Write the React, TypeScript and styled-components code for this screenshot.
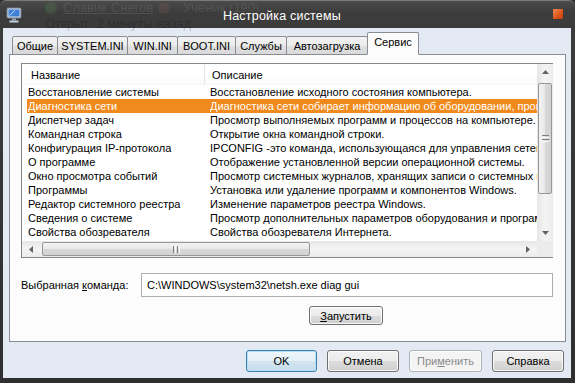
import styled, { createGlobalStyle } from 'styled-components';

const FONT = `'Liberation Sans', Arial, sans-serif`;

const GlobalStyle = createGlobalStyle`
  html, body {
    margin: 0;
    padding: 0;
    background: #2f2f2f;
  }
  body {
    font-family: ${FONT};
    font-size: 11px;
    color: #000;
  }
`;

const Window = styled.div`
  width: 575px;
  height: 383px;
  display: flex;
  flex-direction: column;
  box-sizing: border-box;
  padding: 0 4px 5px 3px;
  background: linear-gradient(#4a4a4a 0px, #3c3c3c 12px, #2f2f2f 100%);
  border-top: 1px solid #7a7a7a;
  border-radius: 6px 6px 0 0;
  overflow: hidden;
`;

const TitleBar = styled.div`
  position: relative;
  height: 27px;
  display: flex;
  align-items: center;
  justify-content: center;
  flex-shrink: 0;
`;

// content behind the glass frame, seen through it
const Ghost = styled.div`
  position: absolute;
  left: 42px;
  top: 0px;
  display: flex;
  flex-direction: column;
  gap: 2px;
  font-family: ${FONT};
  font-size: 13px;
  line-height: 14px;
  pointer-events: none;
`;

const GhostRow = styled.div<{ $dim?: boolean }>`
  display: flex;
  align-items: center;
  gap: 6px;
  color: ${(p) => (p.$dim ? 'rgba(0,0,0,0.22)' : 'rgba(170,190,170,0.16)')};
  white-space: nowrap;
`;

const GhostLink = styled.span`
  text-decoration: underline;
`;

const GhostDot = styled.span`
  width: 12px;
  height: 12px;
  border-radius: 50%;
  background: rgba(80, 150, 80, 0.22);
`;

const GhostBadge = styled.span`
  width: 10px;
  height: 10px;
  border-radius: 2px;
  background: rgba(200, 120, 120, 0.12);
`;

const GhostUser = styled.span`
  margin-left: 8px;
`;

const WinIcon = styled.div`
  position: absolute;
  left: 3px;
  top: 6px;
  width: 16px;
  height: 16px;
`;

const Title = styled.div`
  font-family: ${FONT};
  font-size: 12.5px;
  color: #fff;
  letter-spacing: 0.2px;
  margin-left: -10px;
  margin-top: 3px;
  position: relative;
`;

const CloseBtn = styled.div`
  position: absolute;
  right: 8px;
  top: 8px;
  width: 10px;
  height: 10px;
  border-radius: 1px;
  background: linear-gradient(135deg, #f08a4c, #d9541a 60%, #c2410e);
`;

const Client = styled.div`
  flex: 1;
  display: flex;
  flex-direction: column;
  background: #e3eaf3;
  padding: 5px 5px 6px 6px;
  box-sizing: border-box;
`;

const TabStrip = styled.div`
  display: flex;
  align-items: flex-end;
  padding-left: 4px;
  height: 22px;
  position: relative;
  z-index: 1;
  margin-bottom: -1px;
`;

const Tab = styled.div<{ $w: number; $active?: boolean }>`
  width: ${(p) => p.$w}px;
  height: ${(p) => (p.$active ? 23 : 19)}px;
  box-sizing: border-box;
  display: flex;
  align-items: center;
  justify-content: center;
  border: 1px solid #898c95;
  border-bottom: 1px solid ${(p) => (p.$active ? '#fcfcfc' : '#898c95')};
  border-radius: 2px 2px 0 0;
  margin-left: -1px;
  padding-bottom: ${(p) => (p.$active ? 3 : 0)}px;
  background: ${(p) =>
    p.$active ? '#fcfcfc' : 'linear-gradient(#f3f3f3, #ebebeb 50%, #e0e0e0 51%, #d9d9d9)'};
  position: relative;
  z-index: ${(p) => (p.$active ? 2 : 1)};
  white-space: nowrap;
`;

const Panel = styled.div`
  flex: 1;
  border: 1px solid #898c95;
  background: #fcfcfc;
  display: flex;
  flex-direction: column;
  padding: 8px 12px 0 11px;
  box-sizing: border-box;
`;

const ListBox = styled.div`
  border: 1px solid #828790;
  background: #fff;
  display: grid;
  grid-template-columns: 515px 16px;
  grid-template-rows: 177px 16px;
`;

const Main = styled.div`
  display: flex;
  flex-direction: column;
  overflow: hidden;
`;

const Header = styled.div`
  display: flex;
  height: 21px;
  flex-shrink: 0;
  background: linear-gradient(#ffffff, #ffffff 60%, #f7f8f9);
`;

const HeaderCell = styled.div<{ $w?: number; $pad: number }>`
  width: ${(p) => (p.$w ? `${p.$w}px` : 'auto')};
  flex: ${(p) => (p.$w ? '0 0 auto' : '1')};
  box-sizing: border-box;
  padding-left: ${(p) => p.$pad}px;
  display: flex;
  align-items: center;
  border-right: ${(p) => (p.$w ? '1px solid #e5e5e5' : 'none')};
`;

const Rows = styled.div`
  display: flex;
  flex-direction: column;
  padding-left: 5px;
`;

const Row = styled.div<{ $sel?: boolean }>`
  display: flex;
  height: 14px;
  line-height: 14px;
  padding-left: 1px;
  white-space: nowrap;
  overflow: hidden;
  background: ${(p) => (p.$sel ? '#f18a1c' : 'transparent')};
  color: ${(p) => (p.$sel ? '#fff' : '#000')};
`;

const Cell = styled.div<{ $w?: number }>`
  flex: ${(p) => (p.$w ? `0 0 ${p.$w}px` : '1 0 auto')};
  overflow: hidden;
`;

const VScroll = styled.div`
  grid-row: 1;
  grid-column: 2;
  background: linear-gradient(90deg, #e6e6e6, #f4f4f4 50%, #ececec);
  display: flex;
  flex-direction: column;
  align-items: center;
`;

const HScroll = styled.div`
  grid-row: 2;
  grid-column: 1;
  background: linear-gradient(#e6e6e6, #f4f4f4 50%, #ececec);
  display: flex;
  align-items: center;
`;

const Corner = styled.div`
  grid-row: 2;
  grid-column: 2;
  background: #ececec;
`;

const ArrowBox = styled.div<{ $size: number }>`
  width: ${(p) => p.$size}px;
  height: ${(p) => p.$size}px;
  display: flex;
  align-items: center;
  justify-content: center;
  flex-shrink: 0;
`;

const VThumb = styled.div`
  width: 14px;
  height: 111px;
  margin-top: 3px;
  box-sizing: border-box;
  border: 1px solid #979797;
  border-radius: 2px;
  background: linear-gradient(90deg, #f3f3f3, #e8e8e8 50%, #d8d8d8 51%, #d2d2d2);
  display: flex;
  align-items: center;
  justify-content: center;
`;

const HThumb = styled.div`
  width: 268px;
  height: 14px;
  margin-left: 2px;
  box-sizing: border-box;
  border: 1px solid #979797;
  border-radius: 2px;
  background: linear-gradient(#f3f3f3, #e8e8e8 50%, #d8d8d8 51%, #d2d2d2);
  display: flex;
  align-items: center;
  justify-content: center;
`;

const Spacer = styled.div`
  flex: 1;
`;

const CommandRow = styled.div`
  display: flex;
  align-items: center;
  margin-top: 15px;
`;

const Label = styled.div`
  width: 120px;
  flex-shrink: 0;
  white-space: nowrap;
`;

const TextBox = styled.div`
  flex: 1;
  height: 24px;
  box-sizing: border-box;
  border: 1px solid #abadb3;
  background: #fff;
  display: flex;
  align-items: center;
  padding-left: 5px;
  white-space: nowrap;
`;

const RunRow = styled.div`
  display: flex;
  justify-content: center;
  padding-left: 118px;
  margin-top: 9px;
`;

const Button = styled.div<{ $w: number; $h: number; $focus?: boolean; $disabled?: boolean }>`
  width: ${(p) => p.$w}px;
  height: ${(p) => p.$h}px;
  box-sizing: border-box;
  border: 1px solid ${(p) => (p.$focus ? '#3c7fb1' : p.$disabled ? '#adb2b5' : '#707070')};
  border-radius: 3px;
  background: ${(p) =>
    p.$disabled
      ? '#f4f4f4'
      : p.$focus
        ? 'linear-gradient(#eef6fb, #e4eff7 50%, #d3e5f1 51%, #c7dcea)'
        : 'linear-gradient(#f2f2f2, #ebebeb 50%, #dddddd 51%, #cfcfcf)'};
  box-shadow: inset 0 0 0 1px ${(p) => (p.$focus ? '#b6e0f7' : 'rgba(255,255,255,0.8)')};
  color: ${(p) => (p.$disabled ? '#8b8b8b' : '#000')};
  display: flex;
  align-items: center;
  justify-content: center;
  white-space: nowrap;
`;

const Key = styled.span`
  text-decoration: underline;
`;

const ButtonRow = styled.div`
  display: flex;
  justify-content: flex-end;
  gap: 10px;
  margin-top: 8px;
  padding-right: 2px;
`;

const Tri = ({ dir }: { dir: 'up' | 'down' | 'left' | 'right' }) => {
  const pts = {
    up: '3.5,1 7,5 0,5',
    down: '0,1 7,1 3.5,5',
    left: '5,0 5,7 1,3.5',
    right: '1,0 1,7 5,3.5',
  }[dir];
  const vertical = dir === 'up' || dir === 'down';
  return (
    <svg width={vertical ? 7 : 6} height={vertical ? 6 : 7}>
      <polygon points={pts} fill="#5f6368" />
    </svg>
  );
};

const Grip = ({ vertical }: { vertical?: boolean }) => (
  <svg width={7} height={7}>
    {[0, 2, 4, 6].map((i) =>
      vertical ? (
        <rect key={i} x={0} y={i} width={7} height={1} fill={i % 4 === 0 ? '#7d7d7d' : '#fafafa'} />
      ) : (
        <rect key={i} x={i} y={0} width={1} height={7} fill={i % 4 === 0 ? '#7d7d7d' : '#fafafa'} />
      ),
    )}
  </svg>
);

const MonitorIcon = () => (
  <svg width="16" height="16" viewBox="0 0 16 16">
    <rect x="1" y="1" width="14" height="10" rx="1" fill="#d8dde6" stroke="#6c7a8c" />
    <rect x="2.5" y="2.5" width="11" height="7" fill="#3f7fd6" />
    <path d="M3.5 8.5 L9 3.5" stroke="#cfe3ff" strokeWidth="1" />
    <rect x="6" y="11.5" width="4" height="2" fill="#9aa4b0" />
    <rect x="3.5" y="13.5" width="9" height="2" rx="0.5" fill="#c9cfd7" stroke="#7b8694" strokeWidth="0.6" />
  </svg>
);

const tabs: { label: string; w: number; active?: boolean }[] = [
  { label: 'Общие', w: 46 },
  { label: 'SYSTEM.INI', w: 71 },
  { label: 'WIN.INI', w: 51 },
  { label: 'BOOT.INI', w: 59 },
  { label: 'Службы', w: 52 },
  { label: 'Автозагрузка', w: 82 },
  { label: 'Сервис', w: 52, active: true },
];

const tools: [string, string][] = [
  ['Восстановление системы', 'Восстановление исходного состояния компьютера.'],
  ['Диагностика сети', 'Диагностика сети собирает информацию об оборудовании, программном обеспечении'],
  ['Диспетчер задач', 'Просмотр выполняемых программ и процессов на компьютере.'],
  ['Командная строка', 'Открытие окна командной строки.'],
  ['Конфигурация IP-протокола', 'IPCONFIG -это команда, использующаяся для управления сетевыми подключениями'],
  ['О программе', 'Отображение установленной версии операционной системы.'],
  ['Окно просмотра событий', 'Просмотр системных журналов, хранящих записи о системных и других событиях'],
  ['Программы', 'Установка или удаление программ и компонентов Windows.'],
  ['Редактор системного реестра', 'Изменение параметров реестра Windows.'],
  ['Сведения о системе', 'Просмотр дополнительных параметров оборудования и программного обеспечения'],
  ['Свойства обозревателя', 'Свойства обозревателя Интернета.'],
];

export default function App() {
  return (
    <>
      <GlobalStyle />
      <Window>
        <TitleBar>
          <Ghost>
            <GhostRow>
              <GhostDot />
              <GhostLink>Славик Снегов</GhostLink>
              <GhostBadge />
              <GhostUser>Ученик (190)</GhostUser>
            </GhostRow>
            <GhostRow $dim>Открыт: 2 минуты назад</GhostRow>
          </Ghost>
          <WinIcon>
            <MonitorIcon />
          </WinIcon>
          <Title>Настройка системы</Title>
          <CloseBtn />
        </TitleBar>
        <Client>
          <TabStrip>
            {tabs.map((t) => (
              <Tab key={t.label} $w={t.w} $active={t.active}>
                {t.label}
              </Tab>
            ))}
          </TabStrip>
          <Panel>
            <ListBox>
              <Main>
                <Header>
                  <HeaderCell $w={183} $pad={9}>Название</HeaderCell>
                  <HeaderCell $pad={7}>Описание</HeaderCell>
                </Header>
                <Rows>
                  {tools.map(([name, desc], i) => (
                    <Row key={name} $sel={i === 1}>
                      <Cell $w={182}>{name}</Cell>
                      <Cell>{desc}</Cell>
                    </Row>
                  ))}
                </Rows>
              </Main>
              <VScroll>
                <ArrowBox $size={16}>
                  <Tri dir="up" />
                </ArrowBox>
                <VThumb>
                  <Grip vertical />
                </VThumb>
                <Spacer />
                <ArrowBox $size={16}>
                  <Tri dir="down" />
                </ArrowBox>
              </VScroll>
              <HScroll>
                <ArrowBox $size={18}>
                  <Tri dir="left" />
                </ArrowBox>
                <HThumb>
                  <Grip />
                </HThumb>
                <Spacer />
                <ArrowBox $size={18}>
                  <Tri dir="right" />
                </ArrowBox>
              </HScroll>
              <Corner />
            </ListBox>
            <CommandRow>
              <Label>
                Выбранная <Key>к</Key>оманда:
              </Label>
              <TextBox>C:\WINDOWS\system32\netsh.exe diag gui</TextBox>
            </CommandRow>
            <RunRow>
              <Button $w={74} $h={19}>
                <Key>З</Key>апустить
              </Button>
            </RunRow>
          </Panel>
          <ButtonRow>
            <Button $w={71} $h={22} $focus>
              OK
            </Button>
            <Button $w={72} $h={22}>
              Отмена
            </Button>
            <Button $w={73} $h={22} $disabled>
              При<Key>м</Key>енить
            </Button>
            <Button $w={72} $h={22}>
              Справка
            </Button>
          </ButtonRow>
        </Client>
      </Window>
    </>
  );
}
